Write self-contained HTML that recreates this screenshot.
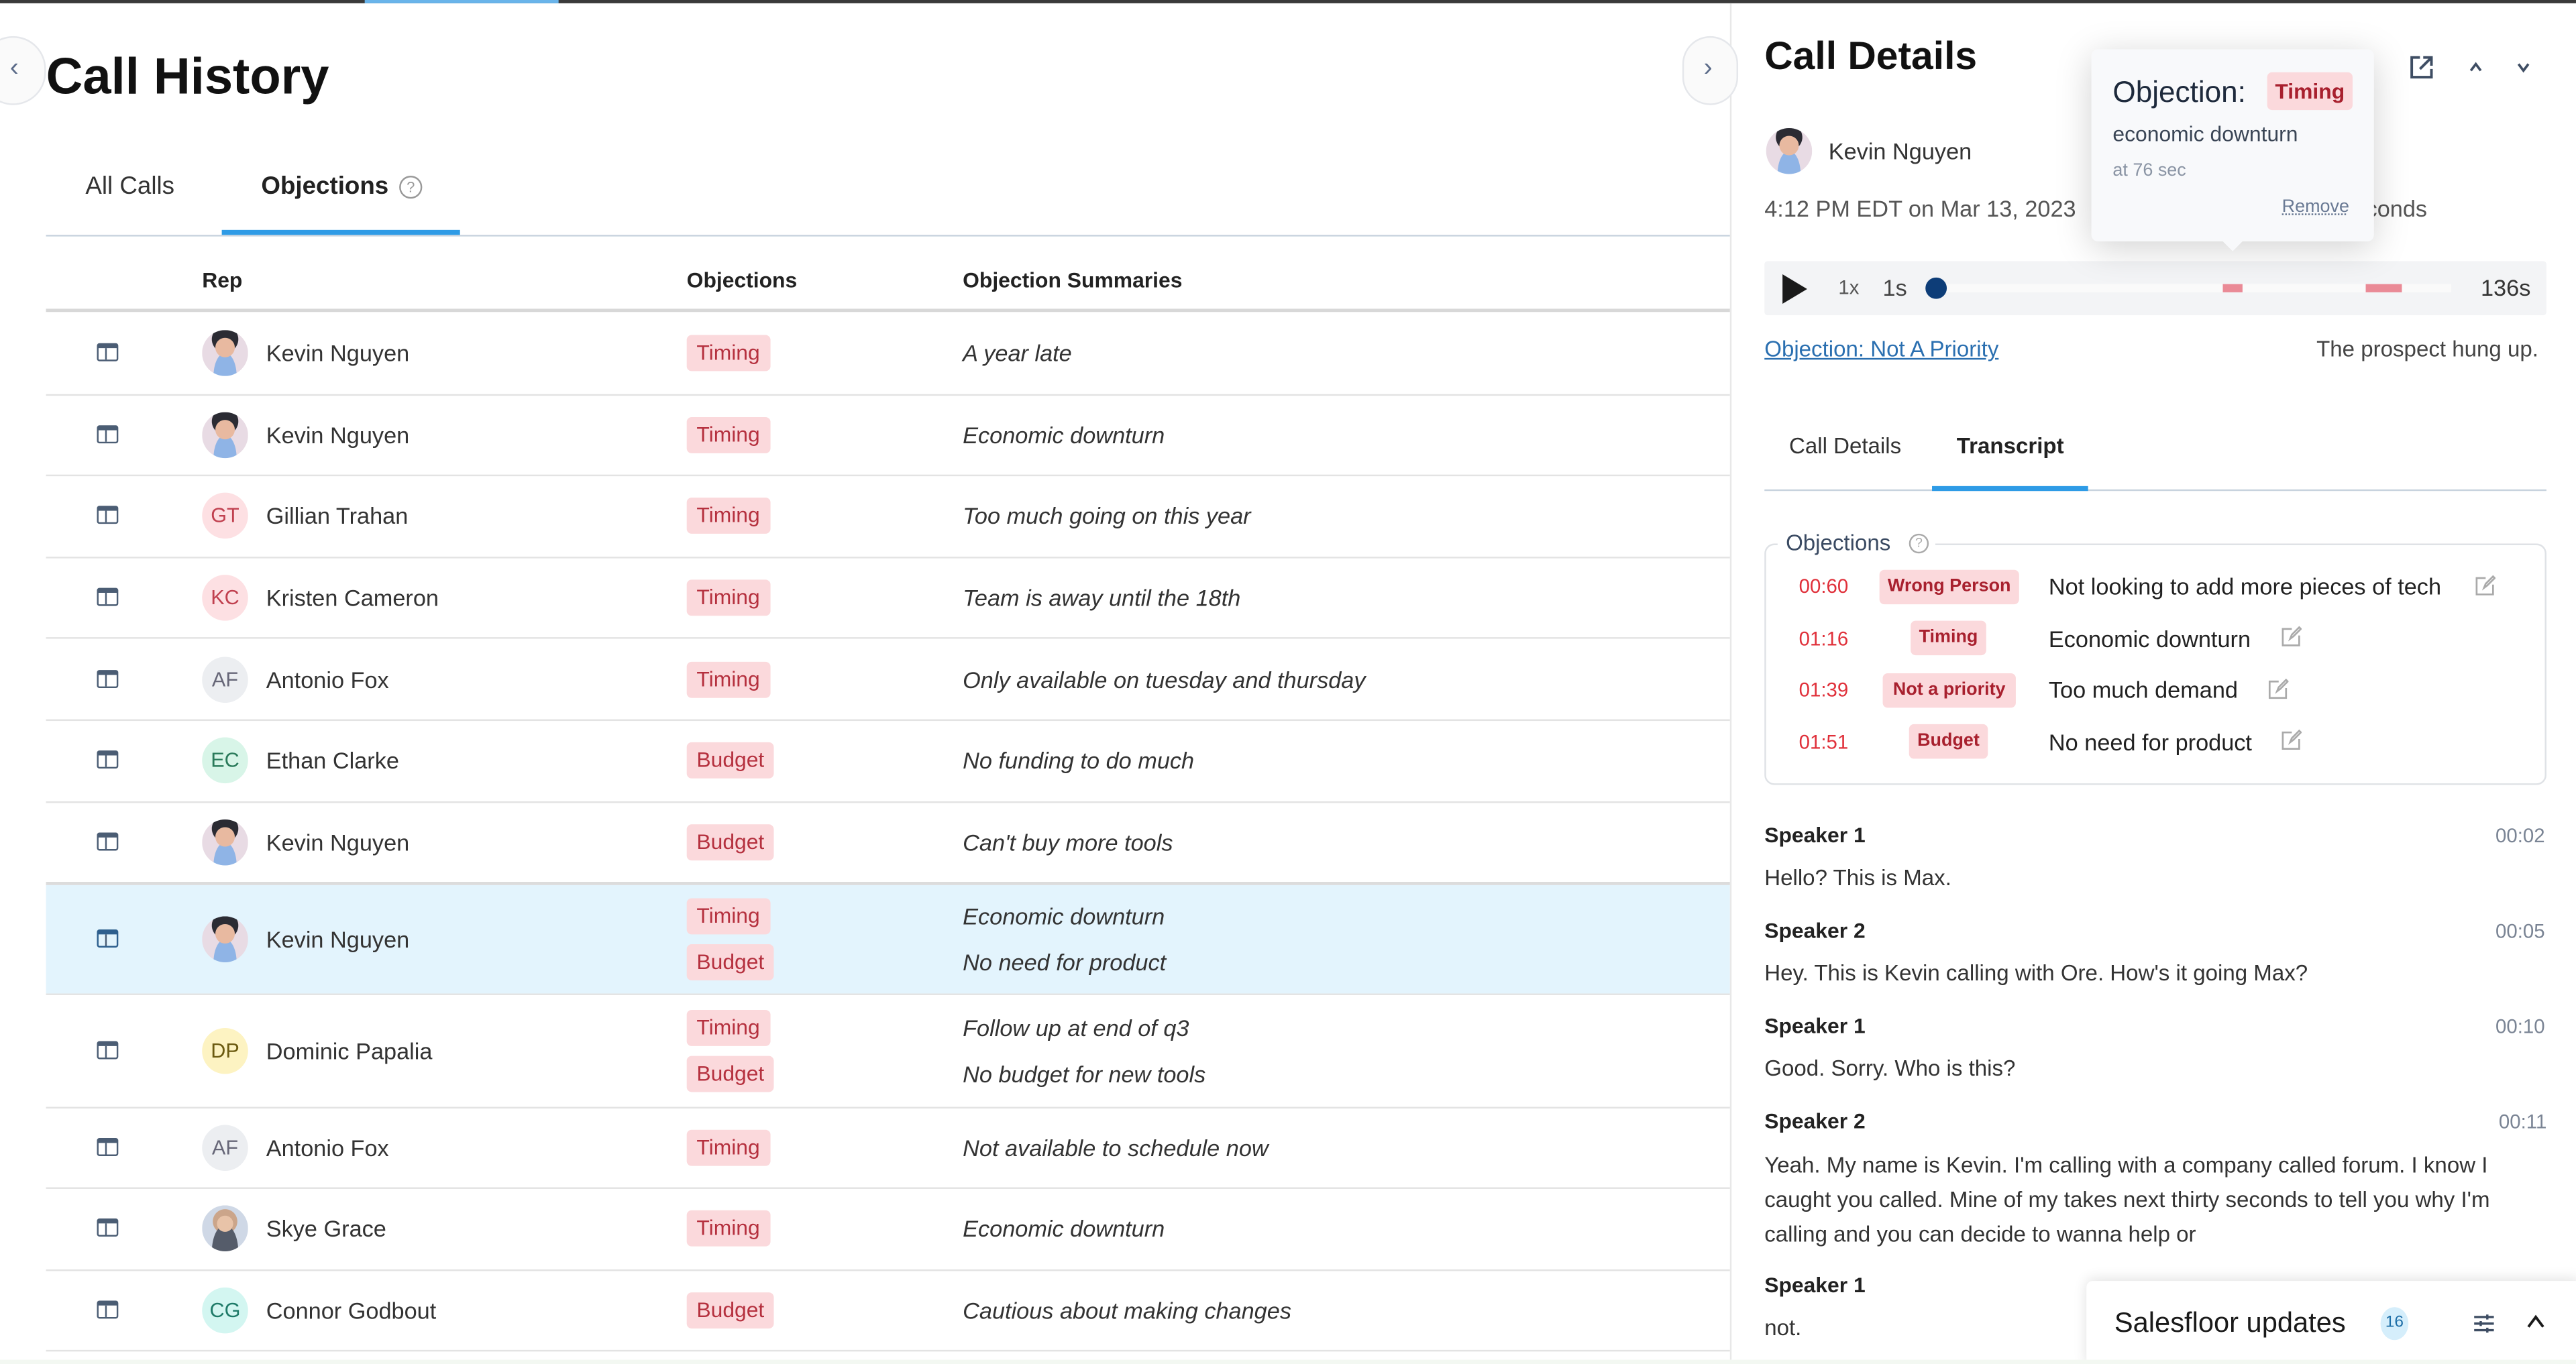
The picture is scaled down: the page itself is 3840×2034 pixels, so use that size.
<!DOCTYPE html>
<html><head><meta charset="utf-8"><style>
html,body{margin:0;padding:0;background:#fff;overflow:hidden}
body{width:3840px;height:2034px;position:relative}
#w{position:absolute;left:0;top:0;width:1568px;height:831px;transform:scale(2.449,2.4488);transform-origin:0 0;font-family:"Liberation Sans",sans-serif;color:#222}
.a{position:absolute;white-space:nowrap}
.t{position:absolute;white-space:nowrap;line-height:20px;height:20px}
.tag{position:absolute;height:22px;line-height:22px;padding:0 6px;background:#fbd9dc;color:#b5303e;font-size:13px;border-radius:3px}
.av{position:absolute;width:28px;height:28px;border-radius:50%;text-align:center;line-height:28px;font-size:12.5px}
.ph{background:radial-gradient(circle at 50% 38%,#e8b9a0 0 26%,transparent 27%),radial-gradient(ellipse at 50% 100%,#8fb4e6 0 35%,transparent 36%),radial-gradient(circle at 50% 20%,#2b2b33 0 30%,transparent 31%),#e8dbe4}
.sk{background:radial-gradient(circle at 50% 40%,#e8c3a8 0 22%,transparent 23%),radial-gradient(ellipse at 50% 100%,#555c6a 0 40%,transparent 41%),radial-gradient(circle at 50% 35%,#cba58a 0 32%,transparent 33%),#cfd8e6}
.line{position:absolute;height:1px;background:#e3e3e3}
.ic{position:absolute;width:13px;height:11px;border:1.6px solid #4b5d74;border-top-width:3px;border-radius:1.5px;box-sizing:border-box}
.ic:after{content:"";position:absolute;left:3.5px;top:0;width:1.6px;height:100%;background:#4b5d74}
.sum{position:absolute;font-style:italic;font-size:14px;color:#333;line-height:20px;white-space:nowrap}
.nm{position:absolute;font-size:14px;color:#333;line-height:20px;white-space:nowrap}
</style></head><body><div id="w">
<div class="a" style="left:0;top:0;width:1568px;height:2px;background:#3a3a3a"></div>
<div class="a" style="left:222px;top:0;width:118px;height:2px;background:#69b4ea"></div>

<div class="a" style="left:-12px;top:22px;width:38px;height:40px;border:1px solid #e5e7eb;border-radius:20px;background:#fafafa"></div>
<div class="t" style="left:6px;top:32px;font-size:16px;color:#5a6a88">‹</div>
<div class="a" style="left:28px;top:27px;font-size:31px;font-weight:bold;color:#111;line-height:40px">Call History</div>

<div class="t" style="left:52px;top:104px;font-size:15px;color:#333">All Calls</div>
<div class="t" style="left:159px;top:104px;font-size:15px;font-weight:bold;color:#222">Objections</div>
<div class="a" style="left:243px;top:107px;width:12px;height:12px;border:1px solid #999;border-radius:50%;font-size:9px;line-height:12px;text-align:center;color:#999">?</div>
<div class="a" style="left:28px;top:143px;width:1025px;height:1px;background:#c8d3de"></div>
<div class="a" style="left:135px;top:140px;width:145px;height:3px;background:#2e9be6"></div>

<div class="t" style="left:123px;top:161px;font-size:13px;font-weight:bold">Rep</div>
<div class="t" style="left:418px;top:161px;font-size:13px;font-weight:bold">Objections</div>
<div class="t" style="left:586px;top:161px;font-size:13px;font-weight:bold">Objection Summaries</div>
<div class="a" style="left:28px;top:188px;width:1025px;height:2px;background:#d8d8d8"></div>

<!-- rows -->
<div class="ic" style="left:59px;top:209px"></div><div class="av ph" style="left:123px;top:201px"></div><div class="nm" style="left:162px;top:205px">Kevin Nguyen</div><div class="tag" style="left:418px;top:204px">Timing</div><div class="sum" style="left:586px;top:205px">A year late</div>
<div class="line" style="left:28px;top:240px;width:1025px"></div>
<div class="ic" style="left:59px;top:259px"></div><div class="av ph" style="left:123px;top:251px"></div><div class="nm" style="left:162px;top:255px">Kevin Nguyen</div><div class="tag" style="left:418px;top:254px">Timing</div><div class="sum" style="left:586px;top:255px">Economic downturn</div>
<div class="line" style="left:28px;top:289px;width:1025px"></div>
<div class="ic" style="left:59px;top:308px"></div><div class="av" style="left:123px;top:300px;background:#fde0e3;color:#c0404f">GT</div><div class="nm" style="left:162px;top:304px">Gillian Trahan</div><div class="tag" style="left:418px;top:303px">Timing</div><div class="sum" style="left:586px;top:304px">Too much going on this year</div>
<div class="line" style="left:28px;top:339px;width:1025px"></div>
<div class="ic" style="left:59px;top:358px"></div><div class="av" style="left:123px;top:350px;background:#fde0e3;color:#c0404f">KC</div><div class="nm" style="left:162px;top:354px">Kristen Cameron</div><div class="tag" style="left:418px;top:353px">Timing</div><div class="sum" style="left:586px;top:354px">Team is away until the 18th</div>
<div class="line" style="left:28px;top:388px;width:1025px"></div>
<div class="ic" style="left:59px;top:408px"></div><div class="av" style="left:123px;top:400px;background:#eceef1;color:#667">AF</div><div class="nm" style="left:162px;top:404px">Antonio Fox</div><div class="tag" style="left:418px;top:403px">Timing</div><div class="sum" style="left:586px;top:404px">Only available on tuesday and thursday</div>
<div class="line" style="left:28px;top:438px;width:1025px"></div>
<div class="ic" style="left:59px;top:457px"></div><div class="av" style="left:123px;top:449px;background:#d8f5e8;color:#2a7a5a">EC</div><div class="nm" style="left:162px;top:453px">Ethan Clarke</div><div class="tag" style="left:418px;top:452px">Budget</div><div class="sum" style="left:586px;top:453px">No funding to do much</div>
<div class="line" style="left:28px;top:488px;width:1025px"></div>
<div class="ic" style="left:59px;top:507px"></div><div class="av ph" style="left:123px;top:499px"></div><div class="nm" style="left:162px;top:503px">Kevin Nguyen</div><div class="tag" style="left:418px;top:502px">Budget</div><div class="sum" style="left:586px;top:503px">Can't buy more tools</div>
<div class="a" style="left:28px;top:537px;width:1025px;height:2px;background:#dcdcdc"></div>
<div class="a" style="left:28px;top:539px;width:1025px;height:66px;background:#e3f4fd"></div>
<div class="ic" style="left:59px;top:566px;border-color:#2e5f8e"></div><div class="av ph" style="left:123px;top:558px"></div><div class="nm" style="left:162px;top:562px">Kevin Nguyen</div><div class="tag" style="left:418px;top:547px">Timing</div><div class="tag" style="left:418px;top:575px">Budget</div><div class="sum" style="left:586px;top:548px">Economic downturn</div><div class="sum" style="left:586px;top:576px">No need for product</div>
<div class="line" style="left:28px;top:605px;width:1025px"></div>
<div class="ic" style="left:59px;top:634px"></div><div class="av" style="left:123px;top:626px;background:#fdf3c2;color:#6b5a10">DP</div><div class="nm" style="left:162px;top:630px">Dominic Papalia</div><div class="tag" style="left:418px;top:615px">Timing</div><div class="tag" style="left:418px;top:643px">Budget</div><div class="sum" style="left:586px;top:616px">Follow up at end of q3</div><div class="sum" style="left:586px;top:644px">No budget for new tools</div>
<div class="line" style="left:28px;top:674px;width:1025px"></div>
<div class="ic" style="left:59px;top:693px"></div><div class="av" style="left:123px;top:685px;background:#eceef1;color:#667">AF</div><div class="nm" style="left:162px;top:689px">Antonio Fox</div><div class="tag" style="left:418px;top:688px">Timing</div><div class="sum" style="left:586px;top:689px">Not available to schedule now</div>
<div class="line" style="left:28px;top:723px;width:1025px"></div>
<div class="ic" style="left:59px;top:742px"></div><div class="av sk" style="left:123px;top:734px"></div><div class="nm" style="left:162px;top:738px">Skye Grace</div><div class="tag" style="left:418px;top:737px">Timing</div><div class="sum" style="left:586px;top:738px">Economic downturn</div>
<div class="line" style="left:28px;top:773px;width:1025px"></div>
<div class="ic" style="left:59px;top:792px"></div><div class="av" style="left:123px;top:784px;background:#d3f6f1;color:#1e7a68">CG</div><div class="nm" style="left:162px;top:788px">Connor Godbout</div><div class="tag" style="left:418px;top:787px">Budget</div><div class="sum" style="left:586px;top:788px">Cautious about making changes</div>
<div class="line" style="left:28px;top:822px;width:1025px"></div>

<!-- divider -->
<div class="a" style="left:1053px;top:2px;width:1px;height:826px;background:#e8e8e8"></div>
<div class="a" style="left:1024px;top:22px;width:32px;height:40px;border:1px solid #e5e7eb;border-radius:20px;background:#fafafa"></div>
<div class="t" style="left:1037px;top:32px;font-size:16px;color:#5a6a88">›</div>

<!-- right panel -->
<div class="a" style="left:1074px;top:20px;font-size:24px;font-weight:bold;color:#111;line-height:30px">Call Details</div>
<div class="av ph" style="left:1075px;top:78px"></div>
<div class="t" style="left:1113px;top:82px;font-size:14px;color:#333">Kevin Nguyen</div>
<div class="t" style="left:1074px;top:117px;font-size:14px;color:#555">4:12 PM EDT on Mar 13, 2023</div>
<div class="t" style="left:1440px;top:117px;font-size:14px;color:#555">conds</div>
<svg class="a" style="left:1466px;top:33px" width="16" height="16" viewBox="0 0 16 16"><path d="M7 2H2v12h12V9M9 2h5v5M14 2L7 9" fill="none" stroke="#3e4d63" stroke-width="1.6"/></svg>
<svg class="a" style="left:1502px;top:37px" width="10" height="8" viewBox="0 0 10 8"><path d="M2 6L5 2L8 6" fill="none" stroke="#3e4d63" stroke-width="1.5"/></svg>
<svg class="a" style="left:1531px;top:37px" width="10" height="8" viewBox="0 0 10 8"><path d="M2 2L5 6L8 2" fill="none" stroke="#3e4d63" stroke-width="1.5"/></svg>

<div class="a" style="left:1074px;top:159px;width:476px;height:33px;background:#f3f4f6;border-radius:2px"></div>
<svg class="a" style="left:1084px;top:166px" width="18" height="20" viewBox="0 0 18 20"><path d="M1 1L16 10L1 19Z" fill="#1a1a1a"/></svg>
<div class="t" style="left:1119px;top:165px;font-size:12px;color:#555">1x</div>
<div class="t" style="left:1146px;top:165px;font-size:14px;color:#444">1s</div>
<div class="a" style="left:1180px;top:173px;width:312px;height:5px;background:#fafafa"></div>
<div class="a" style="left:1172px;top:169px;width:13px;height:13px;border-radius:50%;background:#0d3d78"></div>
<div class="a" style="left:1353px;top:173px;width:12px;height:5px;background:#ea8a96"></div>
<div class="a" style="left:1440px;top:173px;width:22px;height:5px;background:#ea8a96"></div>
<div class="t" style="left:1510px;top:165px;font-size:14px;color:#333">136s</div>

<div class="t" style="left:1074px;top:203px;font-size:13.5px;color:#2a6fb0;text-decoration:underline">Objection: Not A Priority</div>
<div class="t" style="left:1410px;top:203px;font-size:13.5px;color:#444">The prospect hung up.</div>

<!-- popup -->
<div class="a" style="left:1273px;top:30px;width:172px;height:117px;background:#f8f9fb;border-radius:4px;box-shadow:0 4px 22px rgba(0,0,0,.18)"></div>
<div class="a" style="left:1352px;top:146px;width:0;height:0;border-left:7px solid transparent;border-right:7px solid transparent;border-top:7px solid #f8f9fb"></div>
<div class="t" style="left:1286px;top:46px;font-size:18px;color:#1e2a3c">Objection:</div>
<div class="a" style="left:1380px;top:44px;width:52px;height:23px;background:#fbd9dc;border-radius:3px;color:#a8202e;font-weight:bold;font-size:13px;line-height:23px;text-align:center">Timing</div>
<div class="t" style="left:1286px;top:72px;font-size:13px;color:#3a4555">economic downturn</div>
<div class="t" style="left:1286px;top:94px;font-size:11px;color:#8a94a4">at 76 sec</div>
<div class="t" style="left:1389px;top:116px;font-size:11px;color:#6a7a94;text-decoration:underline dotted">Remove</div>

<!-- tabs -->
<div class="t" style="left:1089px;top:262px;font-size:13.5px;color:#333">Call Details</div>
<div class="t" style="left:1191px;top:262px;font-size:13.5px;font-weight:bold;color:#222">Transcript</div>
<div class="a" style="left:1074px;top:298px;width:476px;height:1px;background:#c8d3de"></div>
<div class="a" style="left:1176px;top:296px;width:95px;height:3px;background:#2e9be6"></div>

<!-- objections box -->
<div class="a" style="left:1074px;top:331px;width:476px;height:147px;border:1px solid #dfe2e6;border-radius:6px;box-sizing:border-box"></div>
<div class="a" style="left:1082px;top:322px;width:96px;height:18px;background:#fff"></div>
<div class="t" style="left:1087px;top:321px;font-size:13.5px;color:#3a4a62">Objections</div>
<div class="a" style="left:1162px;top:325px;width:10px;height:10px;border:1px solid #aaa;border-radius:50%;font-size:8px;line-height:10px;text-align:center;color:#aaa">?</div>

<div class="t" style="left:1095px;top:347px;font-size:12px;color:#e0303a">00:60</div>
<div class="a" style="left:1144px;top:347px;width:85px;height:21px;line-height:21px;background:#fbd9dc;border-radius:3px;color:#a8202e;font-weight:bold;font-size:11px;text-align:center">Wrong Person</div>
<div class="t" style="left:1247px;top:347px;font-size:14px;color:#222">Not looking to add more pieces of tech</div>
<svg class="a" style="left:1506px;top:350px" width="13" height="13" viewBox="0 0 13 13"><path d="M7 2H1.5v10h10V6M6 8l1-2.5L11.5 1l1 1L8 6.5Z" fill="none" stroke="#aaa" stroke-width="1.1"/></svg>

<div class="t" style="left:1095px;top:379px;font-size:12px;color:#e0303a">01:16</div>
<div class="a" style="left:1163px;top:378px;width:46px;height:21px;line-height:21px;background:#fbd9dc;border-radius:3px;color:#a8202e;font-weight:bold;font-size:11px;text-align:center">Timing</div>
<div class="t" style="left:1247px;top:379px;font-size:14px;color:#222">Economic downturn</div>
<svg class="a" style="left:1388px;top:381px" width="13" height="13" viewBox="0 0 13 13"><path d="M7 2H1.5v10h10V6M6 8l1-2.5L11.5 1l1 1L8 6.5Z" fill="none" stroke="#aaa" stroke-width="1.1"/></svg>

<div class="t" style="left:1095px;top:410px;font-size:12px;color:#e0303a">01:39</div>
<div class="a" style="left:1146px;top:410px;width:81px;height:21px;line-height:21px;background:#fbd9dc;border-radius:3px;color:#a8202e;font-weight:bold;font-size:11px;text-align:center">Not a priority</div>
<div class="t" style="left:1247px;top:410px;font-size:14px;color:#222">Too much demand</div>
<svg class="a" style="left:1380px;top:413px" width="13" height="13" viewBox="0 0 13 13"><path d="M7 2H1.5v10h10V6M6 8l1-2.5L11.5 1l1 1L8 6.5Z" fill="none" stroke="#aaa" stroke-width="1.1"/></svg>

<div class="t" style="left:1095px;top:442px;font-size:12px;color:#e0303a">01:51</div>
<div class="a" style="left:1162px;top:441px;width:48px;height:21px;line-height:21px;background:#fbd9dc;border-radius:3px;color:#a8202e;font-weight:bold;font-size:11px;text-align:center">Budget</div>
<div class="t" style="left:1247px;top:442px;font-size:14px;color:#222">No need for product</div>
<svg class="a" style="left:1388px;top:444px" width="13" height="13" viewBox="0 0 13 13"><path d="M7 2H1.5v10h10V6M6 8l1-2.5L11.5 1l1 1L8 6.5Z" fill="none" stroke="#aaa" stroke-width="1.1"/></svg>

<!-- transcript -->
<div class="t" style="left:1074px;top:499px;font-size:13px;font-weight:bold">Speaker 1</div><div class="t" style="left:1519px;top:499px;font-size:12px;color:#7a8494">00:02</div>
<div class="t" style="left:1074px;top:525px;font-size:13.5px;color:#333">Hello? This is Max.</div>
<div class="t" style="left:1074px;top:557px;font-size:13px;font-weight:bold">Speaker 2</div><div class="t" style="left:1519px;top:557px;font-size:12px;color:#7a8494">00:05</div>
<div class="t" style="left:1074px;top:583px;font-size:13.5px;color:#333">Hey. This is Kevin calling with Ore. How's it going Max?</div>
<div class="t" style="left:1074px;top:615px;font-size:13px;font-weight:bold">Speaker 1</div><div class="t" style="left:1519px;top:615px;font-size:12px;color:#7a8494">00:10</div>
<div class="t" style="left:1074px;top:641px;font-size:13.5px;color:#333">Good. Sorry. Who is this?</div>
<div class="t" style="left:1074px;top:673px;font-size:13px;font-weight:bold">Speaker 2</div><div class="t" style="left:1521px;top:673px;font-size:12px;color:#7a8494">00:11</div>
<div class="a" style="left:1074px;top:699px;font-size:13.5px;color:#333;line-height:21px;white-space:nowrap">Yeah. My name is Kevin. I'm calling with a company called forum. I know I<br>caught you called. Mine of my takes next thirty seconds to tell you why I'm<br>calling and you can decide to wanna help or</div>
<div class="t" style="left:1074px;top:773px;font-size:13px;font-weight:bold">Speaker 1</div>
<div class="t" style="left:1074px;top:799px;font-size:13.5px;color:#333">not.</div>

<!-- salesfloor -->
<div class="a" style="left:1270px;top:780px;width:300px;height:52px;background:#fff;box-shadow:0 -1px 8px rgba(0,0,0,.12);border-radius:4px 0 0 0"></div>
<div class="t" style="left:1287px;top:796px;font-size:17px;color:#1a1a1a">Salesfloor updates</div>
<div class="a" style="left:1449px;top:796px;width:17px;height:20px;border-radius:50%;background:#d5eefb;color:#1e6fa8;font-size:10px;line-height:20px;text-align:center">16</div>
<svg class="a" style="left:1505px;top:799px" width="14" height="14" viewBox="0 0 14 14"><path d="M1 3H13M1 7H13M1 11H13M9 1.5V4.5M5 5.5V8.5M9 9.5V12.5" stroke="#3e4d63" stroke-width="1.4"/></svg>
<svg class="a" style="left:1537px;top:800px" width="13" height="10" viewBox="0 0 13 10"><path d="M2 8L6.5 2L11 8" fill="none" stroke="#1a1a1a" stroke-width="1.6"/></svg>
<div class="a" style="left:0;top:828px;width:1568px;height:3px;background:#f3f8f2"></div>
</div></body></html>
